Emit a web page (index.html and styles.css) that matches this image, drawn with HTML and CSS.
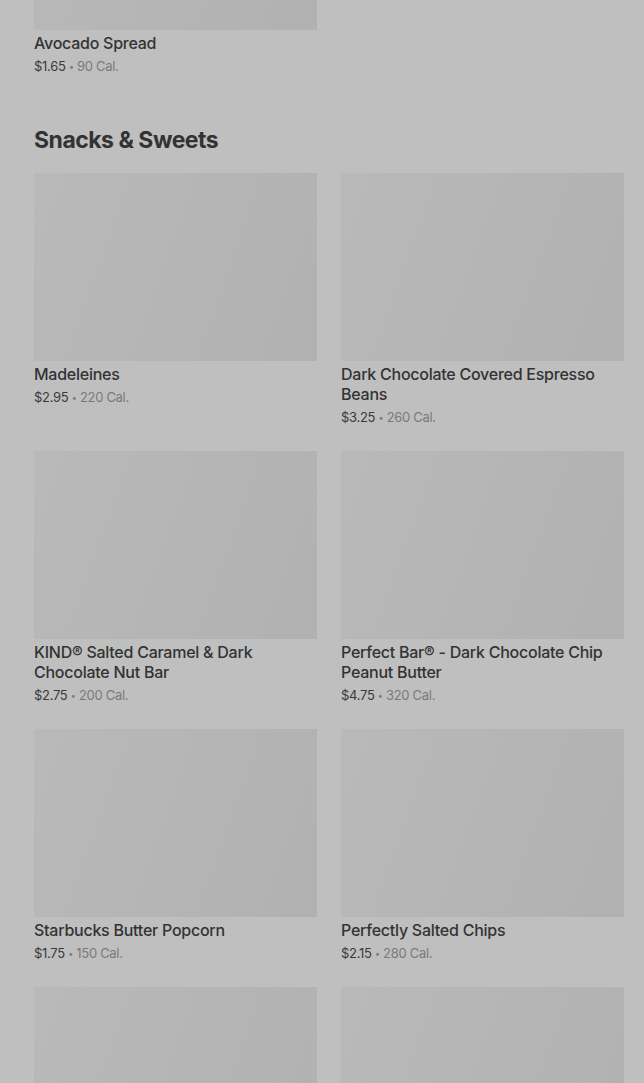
FILE: index.html
```html
<!DOCTYPE html>
<html>
<head>
<meta charset="utf-8">
<link rel="stylesheet" href="styles.css">
</head>
<body>
<main class="page">
  <section class="section top">
    <div class="grid">
      <div class="card">
        <div class="thumb thumb-cut"></div>
        <div class="name">Avocado Spread</div>
        <div class="meta"><span class="price">$1.65</span> <span class="dot">•</span> <span class="cal">90 Cal.</span></div>
      </div>
    </div>
  </section>
  <section class="section">
    <h2 class="heading">Snacks &amp; Sweets</h2>
    <div class="grid">
      <div class="card">
        <div class="thumb"></div>
        <div class="name">Madeleines</div>
        <div class="meta"><span class="price">$2.95</span> <span class="dot">•</span> <span class="cal">220 Cal.</span></div>
      </div>
      <div class="card">
        <div class="thumb"></div>
        <div class="name">Dark Chocolate Covered Espresso Beans</div>
        <div class="meta"><span class="price">$3.25</span> <span class="dot">•</span> <span class="cal">260 Cal.</span></div>
      </div>
      <div class="card">
        <div class="thumb"></div>
        <div class="name">KIND® Salted Caramel &amp; Dark Chocolate Nut Bar</div>
        <div class="meta"><span class="price">$2.75</span> <span class="dot">•</span> <span class="cal">200 Cal.</span></div>
      </div>
      <div class="card">
        <div class="thumb"></div>
        <div class="name">Perfect Bar® - Dark Chocolate Chip Peanut Butter</div>
        <div class="meta"><span class="price">$4.75</span> <span class="dot">•</span> <span class="cal">320 Cal.</span></div>
      </div>
      <div class="card">
        <div class="thumb"></div>
        <div class="name">Starbucks Butter Popcorn</div>
        <div class="meta"><span class="price">$1.75</span> <span class="dot">•</span> <span class="cal">150 Cal.</span></div>
      </div>
      <div class="card">
        <div class="thumb"></div>
        <div class="name">Perfectly Salted Chips</div>
        <div class="meta"><span class="price">$2.15</span> <span class="dot">•</span> <span class="cal">280 Cal.</span></div>
      </div>
      <div class="card">
        <div class="thumb"></div>
      </div>
      <div class="card">
        <div class="thumb"></div>
      </div>
    </div>
  </section>
</main>
</body>
</html>
```

FILE: styles.css
```css
html, body {
  margin: 0;
  padding: 0;
  background: #bfbfbf;
  overflow: hidden;
}
.page {
  padding: 0 20px 0 34px;
  font-family: Inter, "Liberation Sans", sans-serif;
  color: #333333;
  height: 1083px;
  overflow: hidden;
}
.section.top {
  margin-top: -158px;
}
.grid {
  display: grid;
  grid-template-columns: 283px 283px;
  column-gap: 24px;
  row-gap: 24px;
}
.card {
  display: flex;
  flex-direction: column;
}
.thumb {
  height: 188px;
  background: linear-gradient(110deg, #b9b9b9 0%, #b5b5b5 50%, #b1b1b1 100%);
}
.name {
  margin-top: 3px;
  font-size: 16px;
  line-height: 20px;
  font-weight: 500;
  color: #333333;
  letter-spacing: -0.25px;
}
.meta {
  margin-top: 3px;
  font-size: 13px;
  line-height: 20px;
  height: 20px;
  color: #7a7a7a;
  letter-spacing: -0.3px;
}
.price {
  color: #3a3a3a;
}
.dot {
  font-size: 9px;
  line-height: 0;
  vertical-align: 1px;
}
.cal {
  color: #7a7a7a;
}
.heading {
  margin: 48px 0 17px 0;
  font-size: 23px;
  line-height: 32px;
  font-weight: 700;
  color: #333333;
  letter-spacing: -0.5px;
}
```
